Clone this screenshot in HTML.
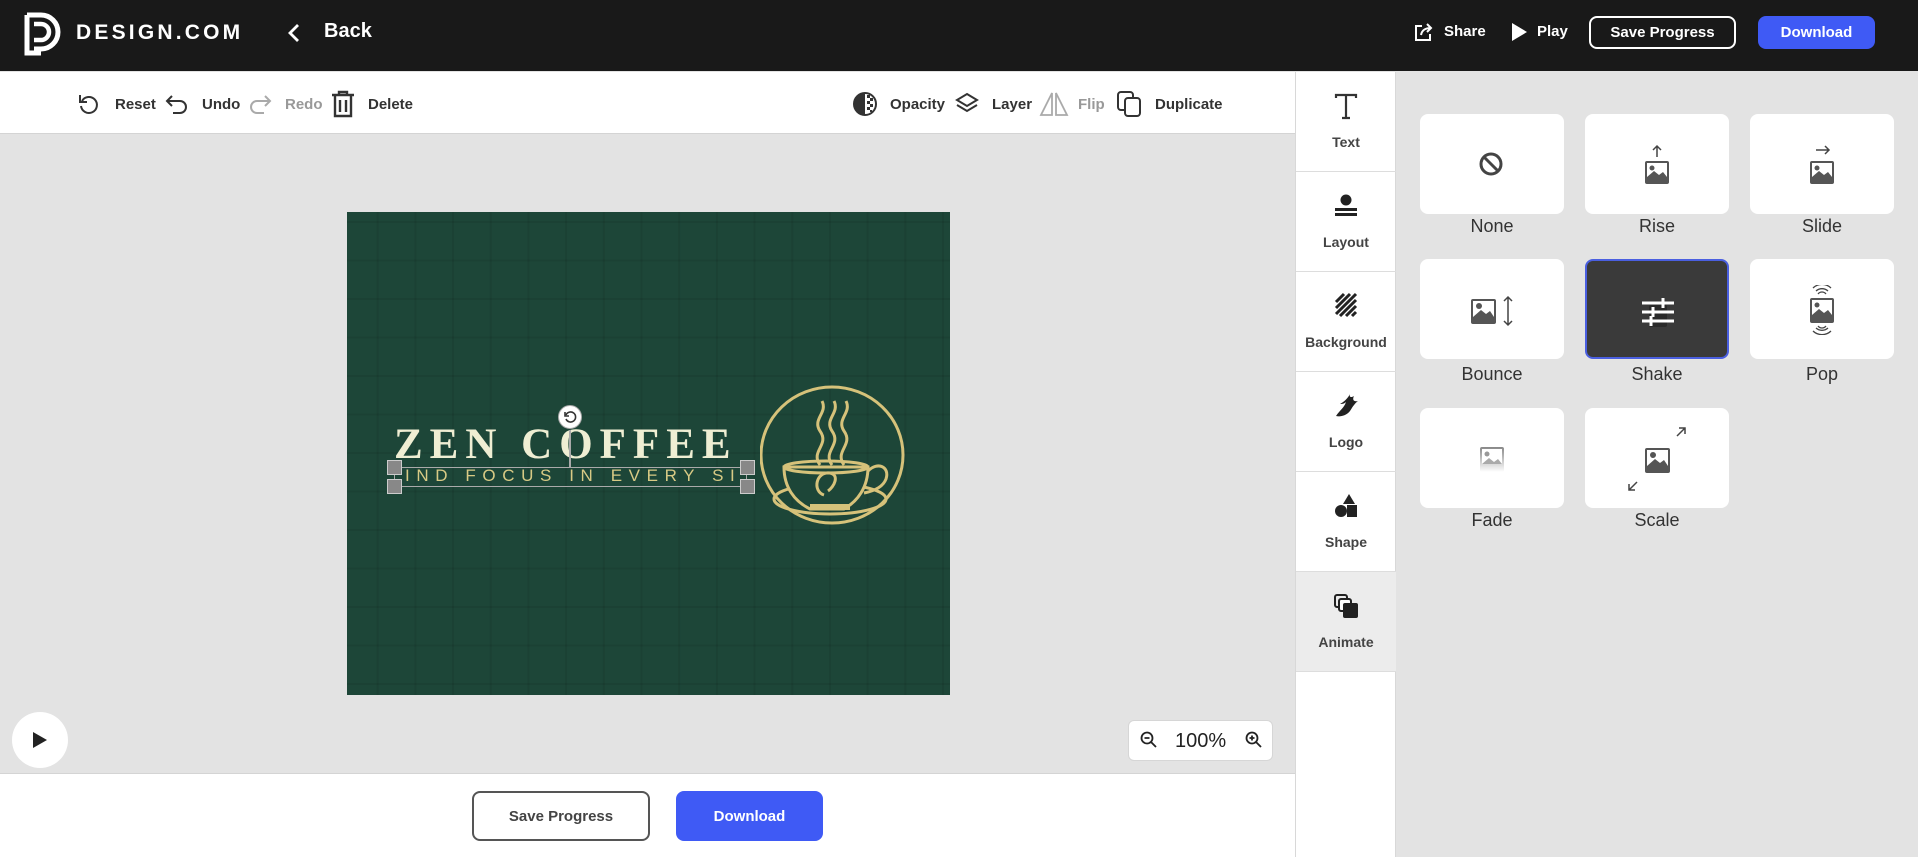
<!DOCTYPE html>
<html><head><meta charset="utf-8"><style>
*{box-sizing:border-box;margin:0;padding:0}
body{width:1918px;height:857px;overflow:hidden;font-family:"Liberation Sans",Arial,sans-serif;background:#e3e3e3;position:relative}
.abs{position:absolute}
.hdr{left:0;top:0;width:1918px;height:71px;background:#191919}
.hdr .t{color:#fff;font-weight:bold}
.btn{position:absolute;border-radius:8px;font-weight:bold;display:flex;align-items:center;justify-content:center}
.tb{left:0;top:72px;width:1295px;height:62px;background:#fff;border-bottom:1px solid #d4d4d4}
.tl{position:absolute;top:96px;font-size:15px;font-weight:bold;color:#333}
.tabs{left:1295px;top:72px;width:101px;height:785px;background:#fff;border-left:1px solid #d8d8d8;border-right:1px solid #d8d8d8}
.tab{position:absolute;left:0;width:100px;height:100px;border-bottom:1px solid #ddd;text-align:center;font-size:14px;font-weight:bold;color:#444}
.tab svg{position:absolute;left:38px;top:20px}
.tab span{position:absolute;left:0;right:0;top:62px}
.card{position:absolute;width:144px;height:100px;background:#fff;border-radius:8px}
.lbl{position:absolute;width:144px;text-align:center;font-size:18px;color:#333}
.card svg{position:absolute}
.bottom{left:0;top:773px;width:1295px;height:84px;background:#fff;border-top:1px solid #d4d4d4}
</style></head><body>
<div class="abs hdr">
 <svg class="abs" style="left:24px;top:12px" width="38" height="44" viewBox="0 0 38 44"><path d="M3 3h14a17 17 0 0 1 0 34H10" fill="none" stroke="#fff" stroke-width="5"/><path d="M3 3v38h14" fill="none" stroke="#fff" stroke-width="5"/><path d="M10 12h7a8 8 0 0 1 0 16h-7" fill="none" stroke="#fff" stroke-width="4.5"/></svg>
 <div class="abs t" style="left:76px;top:21px;font-size:21px;letter-spacing:3.2px;font-weight:bold">DESIGN.COM</div>
 <svg class="abs" style="left:287px;top:22px" width="14" height="22" viewBox="0 0 14 22"><path d="M11 3L3 11l8 8" fill="none" stroke="#fff" stroke-width="2.8"/></svg>
 <div class="abs t" style="left:324px;top:20px;font-size:20px">Back</div>
 <svg class="abs" style="left:1414px;top:22px" width="20" height="20" viewBox="0 0 20 20"><path d="M8 4H2v14h14v-6" fill="none" stroke="#fff" stroke-width="2"/><path d="M7 13c1-5 4-7 10-7M13 2l4 4-4 4" fill="none" stroke="#fff" stroke-width="2"/></svg>
 <div class="abs t" style="left:1444px;top:23px;font-size:15px">Share</div>
 <svg class="abs" style="left:1510px;top:22px" width="18" height="20" viewBox="0 0 18 20"><path d="M2 1l15 9-15 9z" fill="#fff"/></svg>
 <div class="abs t" style="left:1537px;top:23px;font-size:15px">Play</div>
 <div class="btn" style="left:1589px;top:16px;width:147px;height:33px;border:2px solid #fff;color:#fff;font-size:15px">Save Progress</div>
 <div class="btn" style="left:1758px;top:16px;width:117px;height:33px;background:#3f5af5;color:#fff;font-size:15px">Download</div>
</div>
<div class="abs tb"></div>
<svg class="abs" style="left:77px;top:92px" width="24" height="24" viewBox="0 0 24 24"><path d="M5 9a8 8 0 1 1-1 5" fill="none" stroke="#333" stroke-width="2"/><path d="M3 3v7h7" fill="none" stroke="#333" stroke-width="2"/></svg>
<div class="tl" style="left:115px">Reset</div>
<svg class="abs" style="left:164px;top:92px" width="26" height="24" viewBox="0 0 26 24"><path d="M8 4L3 9l5 5M3 9h13a6 6 0 0 1 0 12H9" fill="none" stroke="#333" stroke-width="2"/></svg>
<div class="tl" style="left:202px">Undo</div>
<svg class="abs" style="left:247px;top:92px" width="26" height="24" viewBox="0 0 26 24"><path d="M18 4l5 5-5 5M23 9H10a6 6 0 0 0 0 12h7" fill="none" stroke="#aaa" stroke-width="2"/></svg>
<div class="tl" style="left:285px;color:#999">Redo</div>
<svg class="abs" style="left:330px;top:90px" width="26" height="28" viewBox="0 0 26 28"><path d="M2 5h22M9 5V2h8v3M5 5v21h16V5M10 10v12M16 10v12" fill="none" stroke="#333" stroke-width="2.4"/></svg>
<div class="tl" style="left:368px">Delete</div>
<svg class="abs" style="left:852px;top:91px" width="26" height="26" viewBox="0 0 26 26"><circle cx="13" cy="13" r="11" fill="none" stroke="#333" stroke-width="2"/><path d="M13 2a11 11 0 0 0 0 22z" fill="#333"/><path d="M15 4h3v3h-3zM18 7h3v3h-3zM15 10h3v3h-3zM18 13h3v3h-3zM15 16h3v3h-3zM18 19h2v2h-2z" fill="#333"/></svg>
<div class="tl" style="left:890px">Opacity</div>
<svg class="abs" style="left:954px;top:91px" width="26" height="26" viewBox="0 0 26 26"><path d="M13 3l10 6-10 6-10-6z" fill="none" stroke="#333" stroke-width="2"/><path d="M3 14l10 6 10-6" fill="none" stroke="#333" stroke-width="2"/></svg>
<div class="tl" style="left:992px">Layer</div>
<svg class="abs" style="left:1039px;top:91px" width="30" height="26" viewBox="0 0 30 26"><path d="M13 2L2 24h11zM17 2l11 22H17z" fill="none" stroke="#aaa" stroke-width="1.8"/></svg>
<div class="tl" style="left:1078px;color:#999">Flip</div>
<svg class="abs" style="left:1116px;top:90px" width="28" height="28" viewBox="0 0 28 28"><rect x="2" y="2" width="15" height="18" rx="3" fill="none" stroke="#333" stroke-width="2"/><rect x="9" y="8" width="15" height="18" rx="3" fill="#fff" stroke="#333" stroke-width="2"/></svg>
<div class="tl" style="left:1155px">Duplicate</div>

<div class="abs" style="left:347px;top:212px;width:603px;height:483px;background-color:#1d4638;background-image:linear-gradient(rgba(0,0,0,.08) 2px,transparent 2px),linear-gradient(90deg,rgba(0,0,0,.08) 2px,transparent 2px);background-size:37.7px 38.5px;background-position:-8px 9px"></div>
<div class="abs" style="left:394px;top:420px;font-family:'Liberation Serif',serif;font-weight:bold;font-size:43px;letter-spacing:7px;color:#efeed3">ZEN COFFEE</div>
<div class="abs" style="left:394px;top:467px;width:353px;height:20px;border:1.5px solid #aaa"></div>
<div class="abs" style="left:405px;top:466px;font-size:17px;letter-spacing:6.6px;color:#d8ca85">IND FOCUS IN EVERY SI</div>
<div class="abs" style="left:569px;top:430px;width:1.5px;height:37px;background:#aaa"></div>
<div class="abs" style="left:558px;top:405px;width:24px;height:24px;border-radius:50%;background:#fff;border:1px solid #aaa"></div>
<svg class="abs" style="left:563px;top:410px" width="14" height="14" viewBox="0 0 14 14"><path d="M3 5a5 5 0 1 1 0 4" fill="none" stroke="#333" stroke-width="1.6"/><path d="M2 2v4h4" fill="none" stroke="#333" stroke-width="1.6"/></svg>
<div class="abs" style="left:387px;top:460px;width:15px;height:15px;background:#888;border:1px solid #ccc"></div>
<div class="abs" style="left:387px;top:479px;width:15px;height:15px;background:#888;border:1px solid #ccc"></div>
<div class="abs" style="left:740px;top:460px;width:15px;height:15px;background:#888;border:1px solid #ccc"></div>
<div class="abs" style="left:740px;top:479px;width:15px;height:15px;background:#888;border:1px solid #ccc"></div>
<svg class="abs" style="left:760px;top:385px" width="150" height="145" viewBox="0 0 150 145" fill="none" stroke="#d6c27a" stroke-width="3">
<ellipse cx="72" cy="70" rx="71" ry="68"/>
<ellipse cx="70" cy="114" rx="56" ry="15"/>
<path d="M24 82h84c0 20-10 34-24 42H50c-16-8-26-22-26-42z" fill="#1d4638"/>
<ellipse cx="66" cy="82" rx="42" ry="6"/>
<path d="M108 86c10-10 22-4 18 8-3 8-12 12-22 14"/>
<path d="M60 80c-10-14 10-20 0-34-8-12 8-18 2-30"/><path d="M72 80c-10-14 10-20 0-34-8-12 8-18 2-30"/><path d="M84 80c-10-14 10-20 0-34-8-12 8-18 2-30"/>
<path d="M64 110c-12-4-8-24 6-22 10 2 4 14-2 18"/>
<path d="M50 122h40" stroke-width="6"/>
</svg>

<div class="abs" style="left:12px;top:712px;width:56px;height:56px;border-radius:50%;background:#fff"></div>
<svg class="abs" style="left:32px;top:731px" width="16" height="18" viewBox="0 0 16 18"><path d="M1 1l14 8-14 8z" fill="#222"/></svg>
<div class="abs" style="left:1128px;top:720px;width:145px;height:41px;background:#fff;border-radius:6px;border:1px solid #d6d6d6"></div>
<svg class="abs" style="left:1140px;top:731px" width="18" height="18" viewBox="0 0 18 18"><circle cx="7" cy="7" r="5.5" fill="none" stroke="#222" stroke-width="1.8"/><path d="M11 11l5 5M4.5 7h5" stroke="#222" stroke-width="1.8"/></svg>
<div class="abs" style="left:1175px;top:730px;font-size:20px;color:#222">100%</div>
<svg class="abs" style="left:1245px;top:731px" width="18" height="18" viewBox="0 0 18 18"><circle cx="7" cy="7" r="5.5" fill="none" stroke="#222" stroke-width="1.8"/><path d="M11 11l5 5M4.5 7h5M7 4.5v5" stroke="#222" stroke-width="1.8"/></svg>

<div class="abs bottom"></div>
<div class="btn" style="left:472px;top:791px;width:178px;height:50px;border:2.5px solid #555;color:#444;font-size:15px;background:#fff">Save Progress</div>
<div class="btn" style="left:676px;top:791px;width:147px;height:50px;background:#3f5af5;color:#fff;font-size:15px">Download</div>

<div class="abs tabs">
 <div class="tab" style="top:0"><svg width="24" height="28" viewBox="0 0 24 28"><path d="M2 6V3h20v3M12 3v23M8 26h8" fill="none" stroke="#333" stroke-width="2.2"/></svg><span>Text</span></div>
 <div class="tab" style="top:100px"><svg width="24" height="28" viewBox="0 0 24 28"><circle cx="12" cy="8" r="5.5" fill="#222"/><rect x="1" y="16" width="22" height="3" fill="#222"/><rect x="1" y="21" width="22" height="3" fill="#222"/></svg><span>Layout</span></div>
 <div class="tab" style="top:200px"><svg width="24" height="28" viewBox="0 0 24 28"><path d="M2 10l8-8M2 16L16 2M2 22L22 2M6 24L22 8M12 24l10-10M18 24l4-4" stroke="#222" stroke-width="3"/></svg><span>Background</span></div>
 <div class="tab" style="top:300px"><svg width="24" height="28" viewBox="0 0 24 28"><path d="M2 24c4-6 8-8 10-14-2 2-4 2-6 2 4-2 8-6 10-10-1 3 1 4 4 2-2 4 0 6 4 5-4 3-6 7-8 10-4 5-10 6-14 5z" fill="#222"/></svg><span>Logo</span></div>
 <div class="tab" style="top:400px"><svg width="24" height="28" viewBox="0 0 24 28"><path d="M15 2l6 10h-12z" fill="#222"/><circle cx="7" cy="19" r="6" fill="#222"/><rect x="13" y="13" width="10" height="12" fill="#222"/></svg><span>Shape</span></div>
 <div class="tab" style="top:500px;background:#ececec"><svg width="26" height="28" viewBox="0 0 26 28"><rect x="1" y="3" width="12" height="12" rx="2" fill="none" stroke="#222" stroke-width="2"/><rect x="5" y="7" width="12" height="12" rx="2" fill="#fff" stroke="#222" stroke-width="2"/><rect x="9" y="11" width="15" height="15" rx="2" fill="#222"/></svg><span>Animate</span></div>
</div>

<div class="card" style="left:1420px;top:114px"><svg style="left:58px;top:37px" width="26" height="26" viewBox="0 0 26 26"><circle cx="13" cy="13" r="10" fill="none" stroke="#444" stroke-width="3"/><path d="M6 6l14 14" stroke="#444" stroke-width="3"/></svg></div>
<div class="lbl" style="left:1420px;top:216px">None</div>
<div class="card" style="left:1585px;top:114px"><svg style="left:58px;top:30px" width="28" height="40" viewBox="0 0 28 40"><path d="M14 13V2M10 6l4-4 4 4" fill="none" stroke="#444" stroke-width="1.5"/><rect x="2" y="17" width="24" height="23" rx="2" fill="#555"/><rect x="4" y="19" width="20" height="14" fill="#fff"/><circle cx="9" cy="24" r="2.5" fill="#555"/><path d="M4 33l7-6 5 4 4-3 4 5z" fill="#555"/></svg></div>
<div class="lbl" style="left:1585px;top:216px">Rise</div>
<div class="card" style="left:1750px;top:114px"><svg style="left:58px;top:30px" width="28" height="40" viewBox="0 0 28 40"><path d="M8 6h13M17 2l4 4-4 4" fill="none" stroke="#444" stroke-width="1.5"/><rect x="2" y="17" width="24" height="23" rx="2" fill="#555"/><rect x="4" y="19" width="20" height="14" fill="#fff"/><circle cx="9" cy="24" r="2.5" fill="#555"/><path d="M4 33l7-6 5 4 4-3 4 5z" fill="#555"/></svg></div>
<div class="lbl" style="left:1750px;top:216px">Slide</div>

<div class="card" style="left:1420px;top:259px"><svg style="left:50px;top:36px" width="46" height="32" viewBox="0 0 46 32"><rect x="1" y="4" width="25" height="25" rx="2" fill="#555"/><rect x="3" y="6" width="21" height="16" fill="#fff"/><circle cx="9" cy="11" r="3" fill="#555"/><path d="M3 22l8-7 5 4 4-3 4 6z" fill="#555"/><path d="M38 2v28M34 6l4-4 4 4M34 26l4 4 4-4" fill="none" stroke="#444" stroke-width="1.5"/></svg></div>
<div class="lbl" style="left:1420px;top:364px">Bounce</div>
<div class="card" style="left:1585px;top:259px;background:#3a3a3a;border:2.5px solid #4a5fe0"><svg style="left:54px;top:36px" width="34" height="32" viewBox="0 0 34 32"><rect x="8" y="8" width="18" height="22" rx="2" fill="#2a2a2a"/><path d="M1 6h32M1 15h32M1 24h32" stroke="#fff" stroke-width="3"/><path d="M22 1v10M12 10v10M10 19v10" stroke="#fff" stroke-width="3"/></svg></div>
<div class="lbl" style="left:1585px;top:364px">Shake</div>
<div class="card" style="left:1750px;top:259px"><svg style="left:58px;top:26px" width="28" height="50" viewBox="0 0 28 50"><path d="M8 6a9 9 0 0 1 12 0M5 3a13 13 0 0 1 18 0M10 9a5 5 0 0 1 8 0" fill="none" stroke="#444" stroke-width="1.3"/><rect x="2" y="13" width="24" height="25" rx="2" fill="#555"/><rect x="4" y="15" width="20" height="15" fill="#fff"/><circle cx="9" cy="20" r="2.5" fill="#555"/><path d="M4 30l7-6 5 4 4-3 4 5z" fill="#555"/><path d="M8 43a9 9 0 0 0 12 0M5 46a13 13 0 0 0 18 0M10 41a5 5 0 0 0 8 0" fill="none" stroke="#444" stroke-width="1.3"/></svg></div>
<div class="lbl" style="left:1750px;top:364px">Pop</div>

<div class="card" style="left:1420px;top:408px"><svg style="left:58px;top:37px" width="28" height="28" viewBox="0 0 28 28"><defs><linearGradient id="g" x1="0" y1="0" x2="0" y2="1"><stop offset="0" stop-color="#888"/><stop offset="1" stop-color="#fff"/></linearGradient></defs><rect x="2" y="2" width="24" height="25" rx="2" fill="url(#g)"/><rect x="4" y="4" width="20" height="15" fill="#fff"/><circle cx="9" cy="9" r="2.5" fill="#999"/><path d="M4 19l7-6 5 4 4-3 4 5z" fill="#aaa"/></svg></div>
<div class="lbl" style="left:1420px;top:510px">Fade</div>
<div class="card" style="left:1585px;top:408px"><svg style="left:40px;top:18px" width="66" height="66" viewBox="0 0 66 66"><path d="M52 10l8-8M54 2h6v6" fill="none" stroke="#444" stroke-width="1.5"/><rect x="20" y="22" width="25" height="25" rx="2" fill="#555"/><rect x="22" y="24" width="21" height="16" fill="#fff"/><circle cx="28" cy="29" r="3" fill="#555"/><path d="M22 40l8-7 5 4 4-3 4 6z" fill="#555"/><path d="M12 56l-8 8M4 58v6h6" fill="none" stroke="#444" stroke-width="1.5"/></svg></div>
<div class="lbl" style="left:1585px;top:510px">Scale</div>
</body></html>
